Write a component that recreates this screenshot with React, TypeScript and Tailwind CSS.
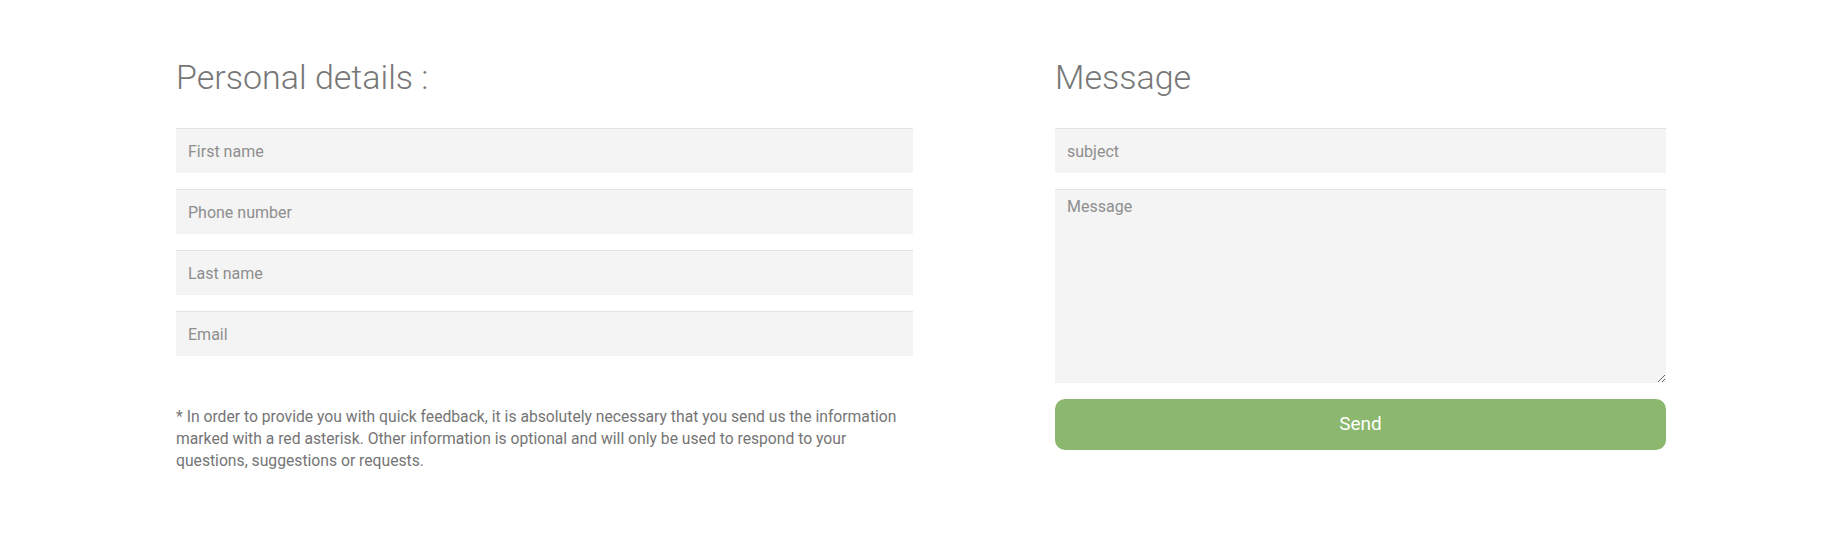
const fieldClass =
  "block w-full h-[45px] bg-[#f4f4f4] border-t border-[#e2e2e2] px-3 text-[16px] text-[#555] placeholder:text-[#8e8e8e] outline-none";

export default function App() {
  const leftFields = ["First name", "Phone number", "Last name", "Email"];

  return (
    <div
      className="w-full min-h-[553px] bg-white pl-[176px] pt-[58px]"
      style={{ fontFamily: "Roboto, 'Noto Sans', Arial, sans-serif" }}
    >
      <div className="flex">
        {/* Personal details */}
        <div className="w-[737px]">
          <h2 className="text-[34px] leading-[38px] font-light text-[#777] mb-[32px]">
            Personal details :
          </h2>
          <div className="flex flex-col gap-[16px]">
            {leftFields.map((f) => (
              <input key={f} type="text" placeholder={f} className={fieldClass} />
            ))}
          </div>
          <p className="mt-[50px] text-[15.7px] leading-[22px] text-[#757575]">
            * In order to provide you with quick feedback, it is absolutely necessary that you send us
            the information marked with a red asterisk. Other information is optional and will only
            be used to respond to your questions, suggestions or requests.
          </p>
        </div>

        {/* Message */}
        <div className="w-[611px] ml-[142px]">
          <h2 className="text-[34px] leading-[38px] font-light text-[#777] mb-[32px]">Message</h2>
          <div className="flex flex-col gap-[16px]">
            <input type="text" placeholder="subject" className={fieldClass} />
            <textarea
              placeholder="Message"
              className="block w-full h-[194px] bg-[#f4f4f4] border-t border-[#e2e2e2] px-3 pt-[6px] text-[16px] leading-[22px] text-[#555] placeholder:text-[#8e8e8e] outline-none"
            />
            <button
              type="button"
              className="w-full h-[51px] rounded-[10px] bg-[#8bb76e] text-white text-[19px]"
            >
              Send
            </button>
          </div>
        </div>
      </div>
    </div>
  );
}
